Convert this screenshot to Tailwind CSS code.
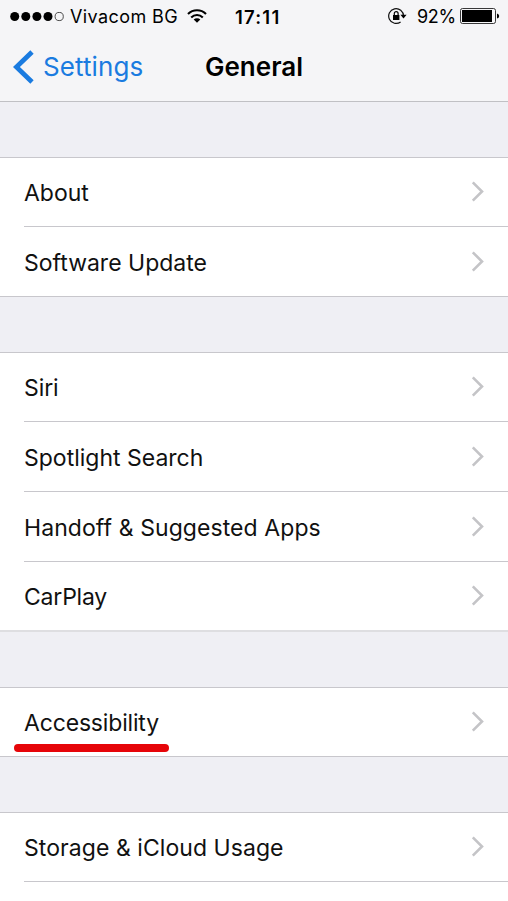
<!DOCTYPE html>
<html lang="en">
<head>
<meta charset="utf-8">
<title>General</title>
<script src="https://cdn.jsdelivr.net/npm/@tailwindcss/browser@4"></script>
</head>
<body class="w-[508px] h-[901px] overflow-hidden bg-[#efeff4] font-['Inter',sans-serif] text-[#111]">
<svg class="hidden"><symbol id="chev" viewBox="0 0 14 22"><path d="M1.8 1.3 11 10.5 1.8 19.7" fill="none" stroke="#c4c4c7" stroke-width="2.6"/></symbol></svg>
<header class="h-[102px] bg-[#f5f5f7] border-b border-[#c0c0c4] text-black">
  <div class="h-8 pt-px flex items-center text-[18px] leading-8">
    <svg class="ml-[10px] shrink-0" width="54" height="10" viewBox="0 0 54 10"><g fill="#000"><circle cx="4.7" cy="4.5" r="4.5"/><circle cx="15.8" cy="4.5" r="4.5"/><circle cx="26.9" cy="4.5" r="4.5"/><circle cx="38" cy="4.5" r="4.5"/></g><circle cx="49.2" cy="4.5" r="4.1" fill="none" stroke="#222" stroke-width=".8"/></svg>
    <span class="ml-[6px] w-[111px] whitespace-nowrap tracking-[0.4px]">Vivacom BG</span>
    <svg class="ml-[6px] mb-[2px] shrink-0" width="20" height="14" viewBox="0 0 20 14"><g fill="none" stroke="#000" stroke-width="2.1"><path d="M1 5.1a12.6 12.6 0 0 1 18 0"/><path d="M4.2 8.4a8.2 8.2 0 0 1 11.6 0"/></g><path d="M6.7 10.5a4.7 4.7 0 0 1 6.6 0L10 13.8z"/></svg>
    <span class="ml-[28px] w-[46px] whitespace-nowrap font-semibold text-[18.5px] tracking-[1.2px]">17:11</span>
    <svg class="ml-[107px] mb-[2px] shrink-0" width="19" height="18" viewBox="0 0 19 18"><path d="M15.5 9A7.4 7.4 0 1 0 12.6 14.9" fill="none" stroke="#111" stroke-width="1.2"/><path d="M12.4 7.8h6.2l-3.1 3.7z"/><rect x="5" y="8" width="6.4" height="5"/><path d="M6.3 8V6.5a1.9 1.9 0 0 1 3.8 0V8" fill="none" stroke="#000" stroke-width="1.2"/></svg>
    <span class="ml-[10px] w-[39px] whitespace-nowrap tracking-[-0.3px]">92%</span>
    <svg class="ml-[4px] mb-[2px] shrink-0" width="40" height="16" viewBox="0 0 40 16"><rect x=".5" y=".5" width="35" height="15" rx="2" fill="none" stroke="#222" stroke-width=".9"/><rect x="2" y="2" width="30" height="12"/><path d="M37 5.5q2.2.5 2.2 2.5T37 10.5z"/></svg>
  </div>
  <div class="h-[69px] flex items-center text-[26px]">
    <svg class="ml-[13px] shrink-0" width="21" height="34" viewBox="0 0 21 34"><path d="M19 2 3.4 17 19 32" fill="none" stroke="#1a7be0" stroke-width="4.8"/></svg>
    <span class="ml-[9px] w-[162px] whitespace-nowrap text-[#1a7be0] tracking-[0.1px]">Settings</span>
    <h1 class="whitespace-nowrap font-semibold">General</h1>
  </div>
</header>
<main class="text-[23px] leading-[28px]">
  <section class="mt-[55px] bg-white border-y border-[#c8c7cc]">
    <div class="pl-6"><div class="h-[69px] border-b border-[#c8c7cc] flex items-center justify-between pr-[23px]"><span class="pt-[2px]">About</span><svg width="14" height="22"><use href="#chev"/></svg></div></div>
    <div class="pl-6 h-[69px] flex items-center justify-between pr-[23px]"><span class="pt-[2px]">Software Update</span><svg width="14" height="22"><use href="#chev"/></svg></div>
  </section>
  <section class="mt-[55px] bg-white border-t border-b-2 border-t-[#c8c7cc] border-b-[#dedee1]">
    <div class="pl-6"><div class="h-[69px] border-b border-[#c8c7cc] flex items-center justify-between pr-[23px]"><span class="pt-[2px] tracking-[-0.1px]">Siri</span><svg width="14" height="22"><use href="#chev"/></svg></div></div>
    <div class="pl-6"><div class="h-[70px] border-b border-[#c8c7cc] flex items-center justify-between pr-[23px]"><span class="pt-[2px]">Spotlight Search</span><svg width="14" height="22"><use href="#chev"/></svg></div></div>
    <div class="pl-6"><div class="h-[70px] border-b border-[#c8c7cc] flex items-center justify-between pr-[23px]"><span class="pt-[2px] tracking-[0.08px]">Handoff &amp; Suggested Apps</span><svg width="14" height="22"><use href="#chev"/></svg></div></div>
    <div class="pl-6 h-[68px] flex items-center justify-between pr-[23px]"><span class="pt-[2px] tracking-[-0.2px]">CarPlay</span><svg width="14" height="22"><use href="#chev"/></svg></div>
  </section>
  <section class="mt-[55px] bg-white border-y border-[#c8c7cc]">
    <div class="pl-6 h-[68px] flex items-center justify-between pr-[23px] relative"><span class="pt-[2px] tracking-[-0.17px]">Accessibility</span><svg width="14" height="22"><use href="#chev"/></svg><i class="absolute left-[14px] top-[56px] w-[155px] h-[8px] rounded-full bg-[#e60509]"></i></div>
  </section>
  <section class="mt-[55px] bg-white border-t border-[#c8c7cc] h-[89px]">
    <div class="pl-6"><div class="h-[69px] border-b border-[#c8c7cc] flex items-center justify-between pr-[23px]"><span class="pt-[2px] tracking-[0.06px]">Storage &amp; iCloud Usage</span><svg width="14" height="22"><use href="#chev"/></svg></div></div>
  </section>
</main>
</body>
</html>
